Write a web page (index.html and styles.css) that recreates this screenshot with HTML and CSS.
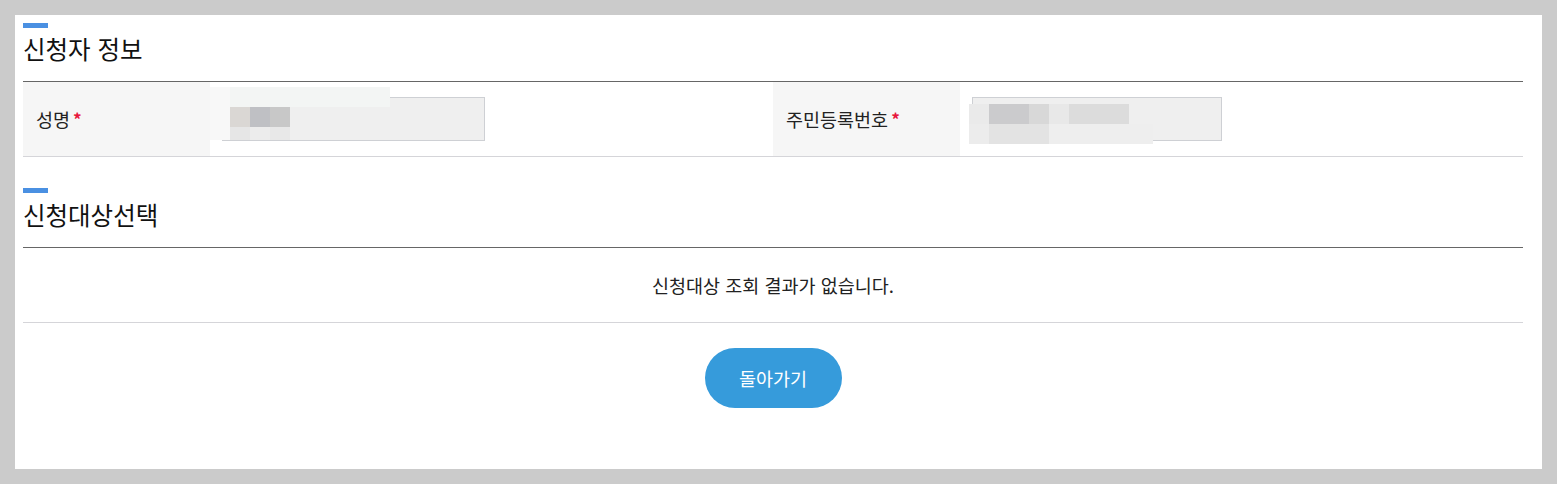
FILE: index.html
```html
<!DOCTYPE html>
<html lang="ko">
<head>
<meta charset="utf-8">
<title>신청자 정보</title>
<link rel="stylesheet" href="styles.css">
</head>
<body>
<div class="panel">
  <section class="section">
    <div class="bar"></div>
    <h2 class="title">신청자 정보</h2>
    <div class="form-row">
      <div class="cell">
        <div class="label">성명<span class="req">*</span></div>
        <div class="value">
          <div class="input input-name"></div>
          <div class="mosaic mosaic-name">
            <div class="mrow mrow-top"><span class="mb w20 c-f8"></span><span class="mb w160 c-f4"></span></div>
            <div class="mrow"><span class="mb w20 c-f8"></span><span class="mb w20 c-da"></span><span class="mb w20 c-bf"></span><span class="mb w20 c-c8"></span></div>
            <div class="mrow mrow-short"><span class="mb w20 c-f8"></span><span class="mb w20 c-e6"></span><span class="mb w20 c-ec"></span><span class="mb w20 c-e8"></span></div>
          </div>
        </div>
      </div>
      <div class="cell">
        <div class="label">주민등록번호<span class="req">*</span></div>
        <div class="value">
          <div class="input input-rrn"></div>
          <div class="mosaic mosaic-rrn">
            <div class="mrow"><span class="mb w20 c-ea"></span><span class="mb w40 c-cb"></span><span class="mb w20 c-d8"></span><span class="mb w20 c-e8"></span><span class="mb w60 c-dc"></span></div>
            <div class="mrow"><span class="mb w20 c-ec"></span><span class="mb w60 c-e3"></span><span class="mb w104 c-ee"></span></div>
          </div>
        </div>
      </div>
    </div>
  </section>

  <section class="section section-second">
    <div class="bar"></div>
    <h2 class="title">신청대상선택</h2>
    <div class="empty-row">신청대상 조회 결과가 없습니다.</div>
  </section>

  <div class="actions">
    <button class="btn-back" type="button">돌아가기</button>
  </div>
</div>
</body>
</html>
```

FILE: styles.css
```css
* { box-sizing: border-box; }

html, body {
  margin: 0;
  padding: 0;
}

body {
  background: #cbcbcb;
  padding: 15px;
  font-family: "Noto Sans CJK KR", "Noto Sans", sans-serif;
  color: #222;
}

.panel {
  background: #fff;
  width: 1527px;
  padding: 8px 19px 61px 8px;
}

.section-second {
  margin-top: 31px;
}

.section-second .title {
  margin-top: 5px;
}

.bar {
  width: 25px;
  height: 5px;
  background: #4a90e2;
}

.title {
  margin: 4px 0 15px 0;
  font-size: 24.5px;
  font-weight: 400;
  line-height: 34px;
  color: #111;
}

.form-row {
  display: grid;
  grid-template-columns: 1fr 1fr;
  border-top: 1px solid #666;
  border-bottom: 1px solid #d5d5d9;
  height: 76px;
}

.cell {
  display: grid;
  grid-template-columns: 187px 1fr;
}

.label {
  background: #f6f6f6;
  display: flex;
  align-items: center;
  padding-left: 13px;
  font-size: 18.5px;
  color: #222;
}

.req {
  color: #e8163c;
  margin-left: 3px;
  font-size: 17px;
  font-weight: 700;
  position: relative;
  top: -1px;
}

.value {
  position: relative;
  display: flex;
  align-items: center;
  padding-left: 12px;
}

.input {
  height: 44px;
  background: #efefef;
  border: 1px solid #ced0d4;
}

.input-name { width: 263px; }
.input-rrn { width: 250px; }

.mosaic {
  position: absolute;
  display: flex;
  flex-direction: column;
}

.mosaic-name { left: 0; top: 5px; }
.mosaic-rrn { left: 9px; top: 22px; }

.mrow { display: flex; height: 20px; }
.mrow-short { height: 13px; }

.mb { display: block; height: 100%; }
.w20 { width: 20px; }
.w40 { width: 40px; }
.w60 { width: 60px; }
.w104 { width: 104px; }
.w160 { width: 160px; }

.c-f8 { background: #f8f8f8; }
.c-f4 { background: #f3f5f4; }
.c-da { background: #dad7d4; }
.c-bf { background: #bfc0c4; }
.c-c8 { background: #c8c8c8; }
.c-e6 { background: #e6e6e6; }
.c-ec { background: #ececec; }
.c-e8 { background: #e8e8e8; }
.c-ea { background: #eaeaea; }
.c-cb { background: #cbcbcd; }
.c-d8 { background: #d8d8d8; }
.c-dc { background: #dcdcdc; }
.c-e3 { background: #e3e3e3; }
.c-ee { background: #eeeeee; }

.empty-row {
  border-top: 1px solid #666;
  border-bottom: 1px solid #d5d5d9;
  height: 76px;
  display: flex;
  align-items: center;
  justify-content: center;
  font-size: 18.5px;
  color: #222;
}

.actions {
  display: flex;
  justify-content: center;
  margin-top: 25px;
}

.btn-back {
  width: 137px;
  height: 60px;
  border: none;
  border-radius: 30px;
  background: #369bdb;
  color: #fff;
  font-family: "Noto Sans CJK KR", "Noto Sans", sans-serif;
  font-size: 18.5px;
  cursor: pointer;
}
```
